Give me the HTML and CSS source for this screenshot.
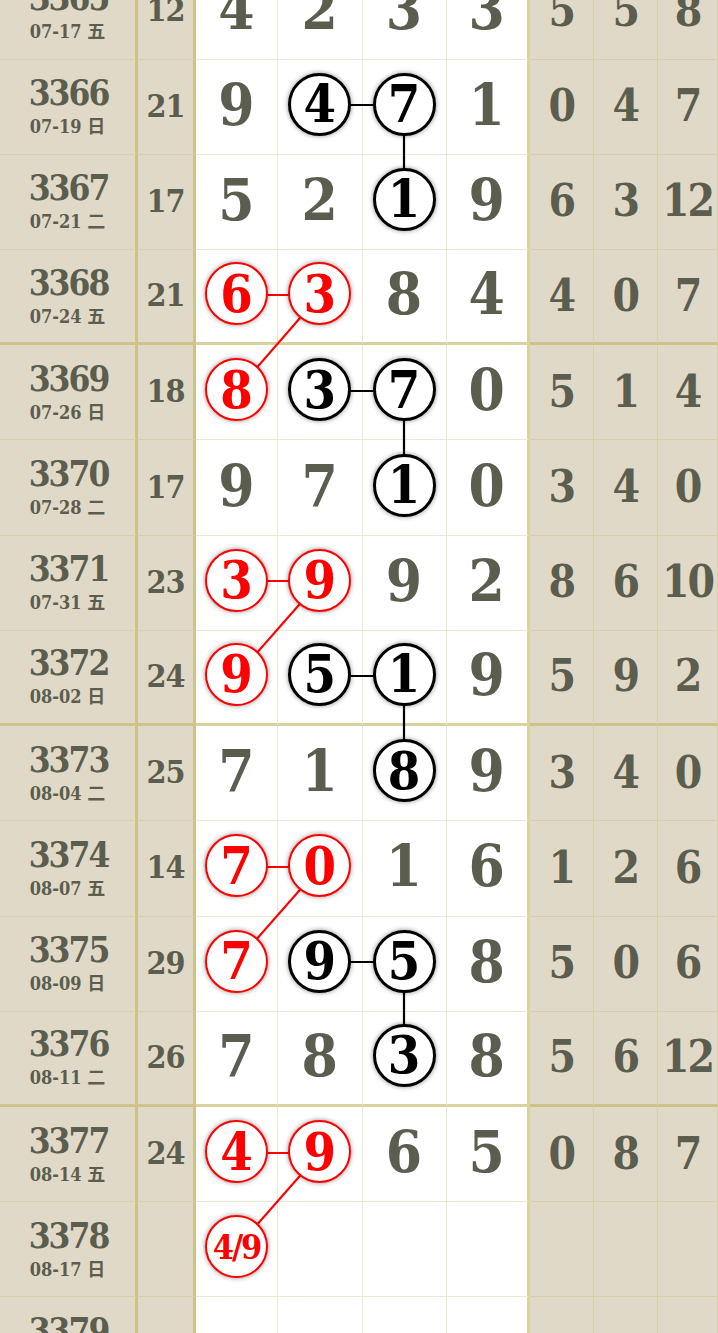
FILE: index.html
```html
<!DOCTYPE html>
<html lang="zh">
<head>
<meta charset="utf-8">
<title>走势图</title>
<link rel="stylesheet" href="styles.css">
</head>
<body>
<div class="sheet">
  <svg class="links" width="718" height="1430" viewBox="0 0 718 1430">
    <g stroke="#000" stroke-width="2.2">
      <line x1="320" y1="141" x2="404" y2="141"/>
      <line x1="404" y1="141" x2="404" y2="236"/>
      <line x1="320" y1="427" x2="404" y2="427"/>
      <line x1="404" y1="427" x2="404" y2="522"/>
      <line x1="320" y1="712" x2="404" y2="712"/>
      <line x1="404" y1="712" x2="404" y2="808"/>
      <line x1="320" y1="998" x2="404" y2="998"/>
      <line x1="404" y1="998" x2="404" y2="1093"/>
    </g>
    <g stroke="#f00" stroke-width="2.2">
      <line x1="236.5" y1="331" x2="320" y2="331"/>
      <line x1="320" y1="331" x2="236.5" y2="427"/>
      <line x1="236.5" y1="617" x2="320" y2="617"/>
      <line x1="320" y1="617" x2="236.5" y2="712"/>
      <line x1="236.5" y1="903" x2="320" y2="903"/>
      <line x1="320" y1="903" x2="236.5" y2="998"/>
      <line x1="236.5" y1="1189" x2="320" y2="1189"/>
      <line x1="320" y1="1189" x2="236.5" y2="1284"/>
    </g>
  </svg>

  <div class="row">
    <div class="c side id"><span class="no">3365</span><span class="dt">07-17 五</span></div>
    <div class="c side sum">12</div>
    <div class="c d">4</div><div class="c d">2</div><div class="c d">3</div><div class="c d last">3</div>
    <div class="c side r">5</div><div class="c side r">5</div><div class="c side r">8</div>
  </div>
  <div class="row">
    <div class="c side id"><span class="no">3366</span><span class="dt">07-19 日</span></div>
    <div class="c side sum">21</div>
    <div class="c d">9</div><div class="c d"><span class="ball">4</span></div><div class="c d"><span class="ball">7</span></div><div class="c d last">1</div>
    <div class="c side r">0</div><div class="c side r">4</div><div class="c side r">7</div>
  </div>
  <div class="row">
    <div class="c side id"><span class="no">3367</span><span class="dt">07-21 二</span></div>
    <div class="c side sum">17</div>
    <div class="c d">5</div><div class="c d">2</div><div class="c d"><span class="ball">1</span></div><div class="c d last">9</div>
    <div class="c side r">6</div><div class="c side r">3</div><div class="c side r">12</div>
  </div>
  <div class="row grp">
    <div class="c side id"><span class="no">3368</span><span class="dt">07-24 五</span></div>
    <div class="c side sum">21</div>
    <div class="c d"><span class="ball red">6</span></div><div class="c d"><span class="ball red">3</span></div><div class="c d">8</div><div class="c d last">4</div>
    <div class="c side r">4</div><div class="c side r">0</div><div class="c side r">7</div>
  </div>
  <div class="row">
    <div class="c side id"><span class="no">3369</span><span class="dt">07-26 日</span></div>
    <div class="c side sum">18</div>
    <div class="c d"><span class="ball red">8</span></div><div class="c d"><span class="ball">3</span></div><div class="c d"><span class="ball">7</span></div><div class="c d last">0</div>
    <div class="c side r">5</div><div class="c side r">1</div><div class="c side r">4</div>
  </div>
  <div class="row">
    <div class="c side id"><span class="no">3370</span><span class="dt">07-28 二</span></div>
    <div class="c side sum">17</div>
    <div class="c d">9</div><div class="c d">7</div><div class="c d"><span class="ball">1</span></div><div class="c d last">0</div>
    <div class="c side r">3</div><div class="c side r">4</div><div class="c side r">0</div>
  </div>
  <div class="row">
    <div class="c side id"><span class="no">3371</span><span class="dt">07-31 五</span></div>
    <div class="c side sum">23</div>
    <div class="c d"><span class="ball red">3</span></div><div class="c d"><span class="ball red">9</span></div><div class="c d">9</div><div class="c d last">2</div>
    <div class="c side r">8</div><div class="c side r">6</div><div class="c side r">10</div>
  </div>
  <div class="row grp">
    <div class="c side id"><span class="no">3372</span><span class="dt">08-02 日</span></div>
    <div class="c side sum">24</div>
    <div class="c d"><span class="ball red">9</span></div><div class="c d"><span class="ball">5</span></div><div class="c d"><span class="ball">1</span></div><div class="c d last">9</div>
    <div class="c side r">5</div><div class="c side r">9</div><div class="c side r">2</div>
  </div>
  <div class="row">
    <div class="c side id"><span class="no">3373</span><span class="dt">08-04 二</span></div>
    <div class="c side sum">25</div>
    <div class="c d">7</div><div class="c d">1</div><div class="c d"><span class="ball">8</span></div><div class="c d last">9</div>
    <div class="c side r">3</div><div class="c side r">4</div><div class="c side r">0</div>
  </div>
  <div class="row">
    <div class="c side id"><span class="no">3374</span><span class="dt">08-07 五</span></div>
    <div class="c side sum">14</div>
    <div class="c d"><span class="ball red">7</span></div><div class="c d"><span class="ball red">0</span></div><div class="c d">1</div><div class="c d last">6</div>
    <div class="c side r">1</div><div class="c side r">2</div><div class="c side r">6</div>
  </div>
  <div class="row">
    <div class="c side id"><span class="no">3375</span><span class="dt">08-09 日</span></div>
    <div class="c side sum">29</div>
    <div class="c d"><span class="ball red">7</span></div><div class="c d"><span class="ball">9</span></div><div class="c d"><span class="ball">5</span></div><div class="c d last">8</div>
    <div class="c side r">5</div><div class="c side r">0</div><div class="c side r">6</div>
  </div>
  <div class="row grp">
    <div class="c side id"><span class="no">3376</span><span class="dt">08-11 二</span></div>
    <div class="c side sum">26</div>
    <div class="c d">7</div><div class="c d">8</div><div class="c d"><span class="ball">3</span></div><div class="c d last">8</div>
    <div class="c side r">5</div><div class="c side r">6</div><div class="c side r">12</div>
  </div>
  <div class="row">
    <div class="c side id"><span class="no">3377</span><span class="dt">08-14 五</span></div>
    <div class="c side sum">24</div>
    <div class="c d"><span class="ball red">4</span></div><div class="c d"><span class="ball red">9</span></div><div class="c d">6</div><div class="c d last">5</div>
    <div class="c side r">0</div><div class="c side r">8</div><div class="c side r">7</div>
  </div>
  <div class="row">
    <div class="c side id"><span class="no">3378</span><span class="dt">08-17 日</span></div>
    <div class="c side sum"></div>
    <div class="c d"><span class="ball red small">4/9</span></div><div class="c d"></div><div class="c d"></div><div class="c d last"></div>
    <div class="c side r"></div><div class="c side r"></div><div class="c side r"></div>
  </div>
  <div class="row">
    <div class="c side id"><span class="no">3379</span><span class="dt">08-19 二</span></div>
    <div class="c side sum"></div>
    <div class="c d"></div><div class="c d"></div><div class="c d"></div><div class="c d last"></div>
    <div class="c side r"></div><div class="c side r"></div><div class="c side r"></div>
  </div>
</div>
</body>
</html>
```

FILE: styles.css
```css
html, body {
  margin: 0;
  padding: 0;
  background: #fff;
  overflow: hidden;
}

body {
  width: 718px;
  height: 1333px;
  font-family: "DejaVu Serif Condensed", "DejaVu Serif", "Noto Sans CJK SC", serif;
  font-weight: bold;
  color: #5b5d4f;
}

.sheet {
  position: relative;
  display: grid;
  grid-template-columns: 138px 58px 82px 84.5px 84px 83.5px 63.5px 64.5px 60px;
  grid-auto-rows: 95.23px;
  margin-top: -35.7px;
}

.row {
  display: contents;
}

.c {
  box-sizing: border-box;
  display: flex;
  align-items: center;
  justify-content: center;
  border-right: 1px solid rgba(200, 185, 110, 0.32);
  border-bottom: 1px solid rgba(200, 185, 110, 0.32);
  background: #fff;
}

.side {
  background: #e1d9c7;
}

.row.grp > .c {
  border-bottom: 3px solid rgba(195, 180, 100, 0.6);
}

.id,
.sum,
.last {
  border-right: 3px solid rgba(195, 180, 100, 0.6);
}

.id {
  flex-direction: column;
  gap: 8px;
  padding-bottom: 2px;
}

.no {
  font-size: 35px;
  line-height: 1;
  letter-spacing: -2px;
  margin-right: -2px;
}

.dt {
  font-size: 18px;
  line-height: 1;
}

.sum {
  font-size: 32px;
  letter-spacing: -1px;
  padding-bottom: 2px;
}

.d {
  font-size: 58px;
  padding-bottom: 4px;
}

.r {
  font-size: 44px;
  letter-spacing: -2px;
  padding-bottom: 2px;
}

.links {
  position: absolute;
  left: 0;
  top: 0;
  z-index: 1;
  pointer-events: none;
}

.ball {
  position: relative;
  z-index: 2;
  box-sizing: border-box;
  width: 63px;
  height: 63px;
  margin-top: -1px;
  border-radius: 50%;
  border: 3px solid #000;
  background: #fff;
  color: #000;
  box-shadow: 0 0 5px rgba(0, 0, 0, 0.45);
  display: flex;
  align-items: center;
  justify-content: center;
  font-size: 52px;
  line-height: 1;
}

.ball.red {
  border: 2.8px solid #f00;
  color: #f00;
}

.ball.small {
  font-size: 34px;
  letter-spacing: -2px;
}
```
